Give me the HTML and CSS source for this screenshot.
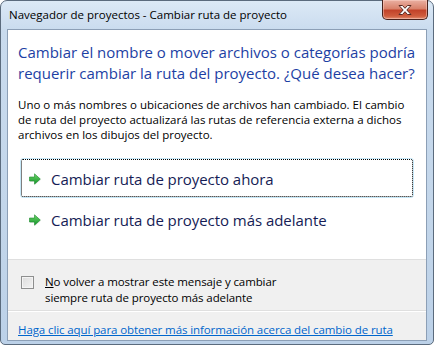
FILE: index.html
```html
<!DOCTYPE html>
<html lang="es">
<head>
<meta charset="utf-8">
<title>Navegador de proyectos - Cambiar ruta de proyecto</title>
<link rel="stylesheet" href="styles.css">
</head>
<body>
<div class="window">
  <div class="titlebar">
    <span class="title">Navegador de proyectos - Cambiar ruta de proyecto</span>
    <div class="close" aria-label="Cerrar">
      <svg width="16" height="12" viewBox="0 0 16 12">
        <path d="M2 1.5h3.5L8 4.3 10.5 1.5H14L9.8 6 14 10.5h-3.5L8 7.7 5.5 10.5H2L6.2 6z" fill="#fff" stroke="#5a2a22" stroke-width="1" stroke-linejoin="round"/>
      </svg>
    </div>
  </div>
  <div class="client">
    <div class="main">
      <div class="instruction">Cambiar el nombre o mover archivos o categorías podría requerir cambiar la ruta del proyecto. ¿Qué desea hacer?</div>
      <div class="content">Uno o más nombres o ubicaciones de archivos han cambiado. El cambio de ruta del proyecto actualizará las rutas de referencia externa a dichos archivos en los dibujos del proyecto.</div>
      <div class="commands">
        <div class="cmd focused">
          <svg class="arrow" width="14" height="14" viewBox="0 0 14 14">
            <defs><linearGradient id="g1" x1="0" y1="0" x2="0" y2="1"><stop offset="0" stop-color="#6fd46a"/><stop offset="1" stop-color="#12962a"/></linearGradient></defs>
            <path d="M1.5 5h5V1.8l5.8 5.2-5.8 5.2V9h-5z" fill="#bcbcbc" opacity=".45" transform="translate(0.6 0.8)"/>
            <path d="M1.5 5h5V1.8l5.8 5.2-5.8 5.2V9h-5z" fill="url(#g1)" stroke="#1b8a2b" stroke-width=".6"/>
          </svg>
          <span class="cmd-text">Cambiar ruta de proyecto ahora</span>
        </div>
        <div class="cmd">
          <svg class="arrow" width="14" height="14" viewBox="0 0 14 14">
            <defs><linearGradient id="g2" x1="0" y1="0" x2="0" y2="1"><stop offset="0" stop-color="#6fd46a"/><stop offset="1" stop-color="#12962a"/></linearGradient></defs>
            <path d="M1.5 5h5V1.8l5.8 5.2-5.8 5.2V9h-5z" fill="#bcbcbc" opacity=".45" transform="translate(0.6 0.8)"/>
            <path d="M1.5 5h5V1.8l5.8 5.2-5.8 5.2V9h-5z" fill="url(#g2)" stroke="#1b8a2b" stroke-width=".6"/>
          </svg>
          <span class="cmd-text">Cambiar ruta de proyecto más adelante</span>
        </div>
      </div>
    </div>
    <div class="footer">
      <div class="verify">
        <span class="checkbox"></span>
        <span class="verify-text"><u>N</u>o volver a mostrar este mensaje y cambiar<br>siempre ruta de proyecto más adelante</span>
      </div>
      <div class="more">
        <a class="link" href="#">Haga clic aquí para obtener más información acerca del cambio de ruta</a>
      </div>
    </div>
  </div>
</div>
</body>
</html>
```

FILE: styles.css
```css
html, body {
  margin: 0;
  padding: 0;
  background: #ffffff;
}

body {
  font-family: "Open Sans", "Noto Sans", sans-serif;
  font-size: 12px;
  color: #000;
}

.window {
  box-sizing: border-box;
  width: 434px;
  height: 345px;
  border: 1px solid #5b6b7d;
  border-radius: 7px 7px 5px 5px;
  background: linear-gradient(180deg, #dce9f6 0%, #c9dbee 30px, #c3d6ea 60%, #bcd1e8 100%);
  padding: 0 6px 3px 6px;
  display: flex;
  flex-direction: column;
}

.titlebar {
  height: 28px;
  display: flex;
  align-items: flex-start;
  justify-content: space-between;
}

.title {
  padding: 6px 0 0 2px;
  font-size: 11.5px;
  color: #000;
}

.close {
  box-sizing: border-box;
  width: 46px;
  height: 20px;
  margin-top: -1px;
  margin-right: -1px;
  border: 1px solid #47221d;
  border-top: none;
  border-radius: 0 0 5px 5px;
  background: linear-gradient(180deg, #eab0a2 0%, #d9826c 45%, #c2432a 55%, #cf5d3e 85%, #e39074 100%);
  box-shadow: inset 0 0 0 1px rgba(255, 220, 210, 0.45);
  display: flex;
  align-items: center;
  justify-content: center;
}

.client {
  flex: 1;
  border: 1px solid #8c9fb6;
  background: #fff;
  display: flex;
  flex-direction: column;
}

.main {
  height: 217px;
  padding: 12px 6px 0 10px;
}

.instruction {
  font-size: 15px;
  line-height: 21px;
  color: #1d3fa4;
}

.content {
  margin-top: 13px;
  width: 388px;
  line-height: 15px;
  font-size: 11.5px;
}

.commands {
  margin-top: 16px;
  display: flex;
  flex-direction: column;
  gap: 1px;
  margin-left: 2px;
  margin-right: 6px;
}

.cmd {
  box-sizing: border-box;
  height: 40px;
  display: flex;
  align-items: center;
  padding-left: 7px;
  padding-top: 1px;
  border: 1px solid transparent;
  border-radius: 3px;
}

.cmd.focused {
  border-color: #c6e8f8;
  outline: 1px dotted #000;
  outline-offset: -2px;
}

.arrow {
  flex: none;
  margin-right: 9px;
}

.cmd-text {
  font-size: 15px;
  color: #151c55;
  letter-spacing: -0.05px;
}

.footer {
  flex: 1;
  background: #f0f0f0;
  border-top: 1px solid #dfdfdf;
  display: flex;
  flex-direction: column;
}

.verify {
  display: flex;
  align-items: flex-start;
  padding: 14px 0 0 13px;
  height: 36px;
  border-bottom: 1px solid #dfdfdf;
  box-shadow: 0 1px 0 #ffffff;
}

.checkbox {
  box-sizing: border-box;
  width: 13px;
  height: 13px;
  margin-top: 2px;
  border: 1px solid #8e8f8f;
  background: linear-gradient(135deg, #dcdcdc 0%, #f3f3f3 100%);
  box-shadow: inset 0 0 0 1px #f4f4f4;
  flex: none;
}

.verify-text {
  margin-left: 11px;
  font-size: 11.5px;
  line-height: 16px;
  letter-spacing: -0.1px;
}

.more {
  padding: 10px 0 0 10px;
}

.link {
  font-size: 11.5px;
  color: #0066cc;
  text-decoration: underline;
  letter-spacing: -0.1px;
}
```
